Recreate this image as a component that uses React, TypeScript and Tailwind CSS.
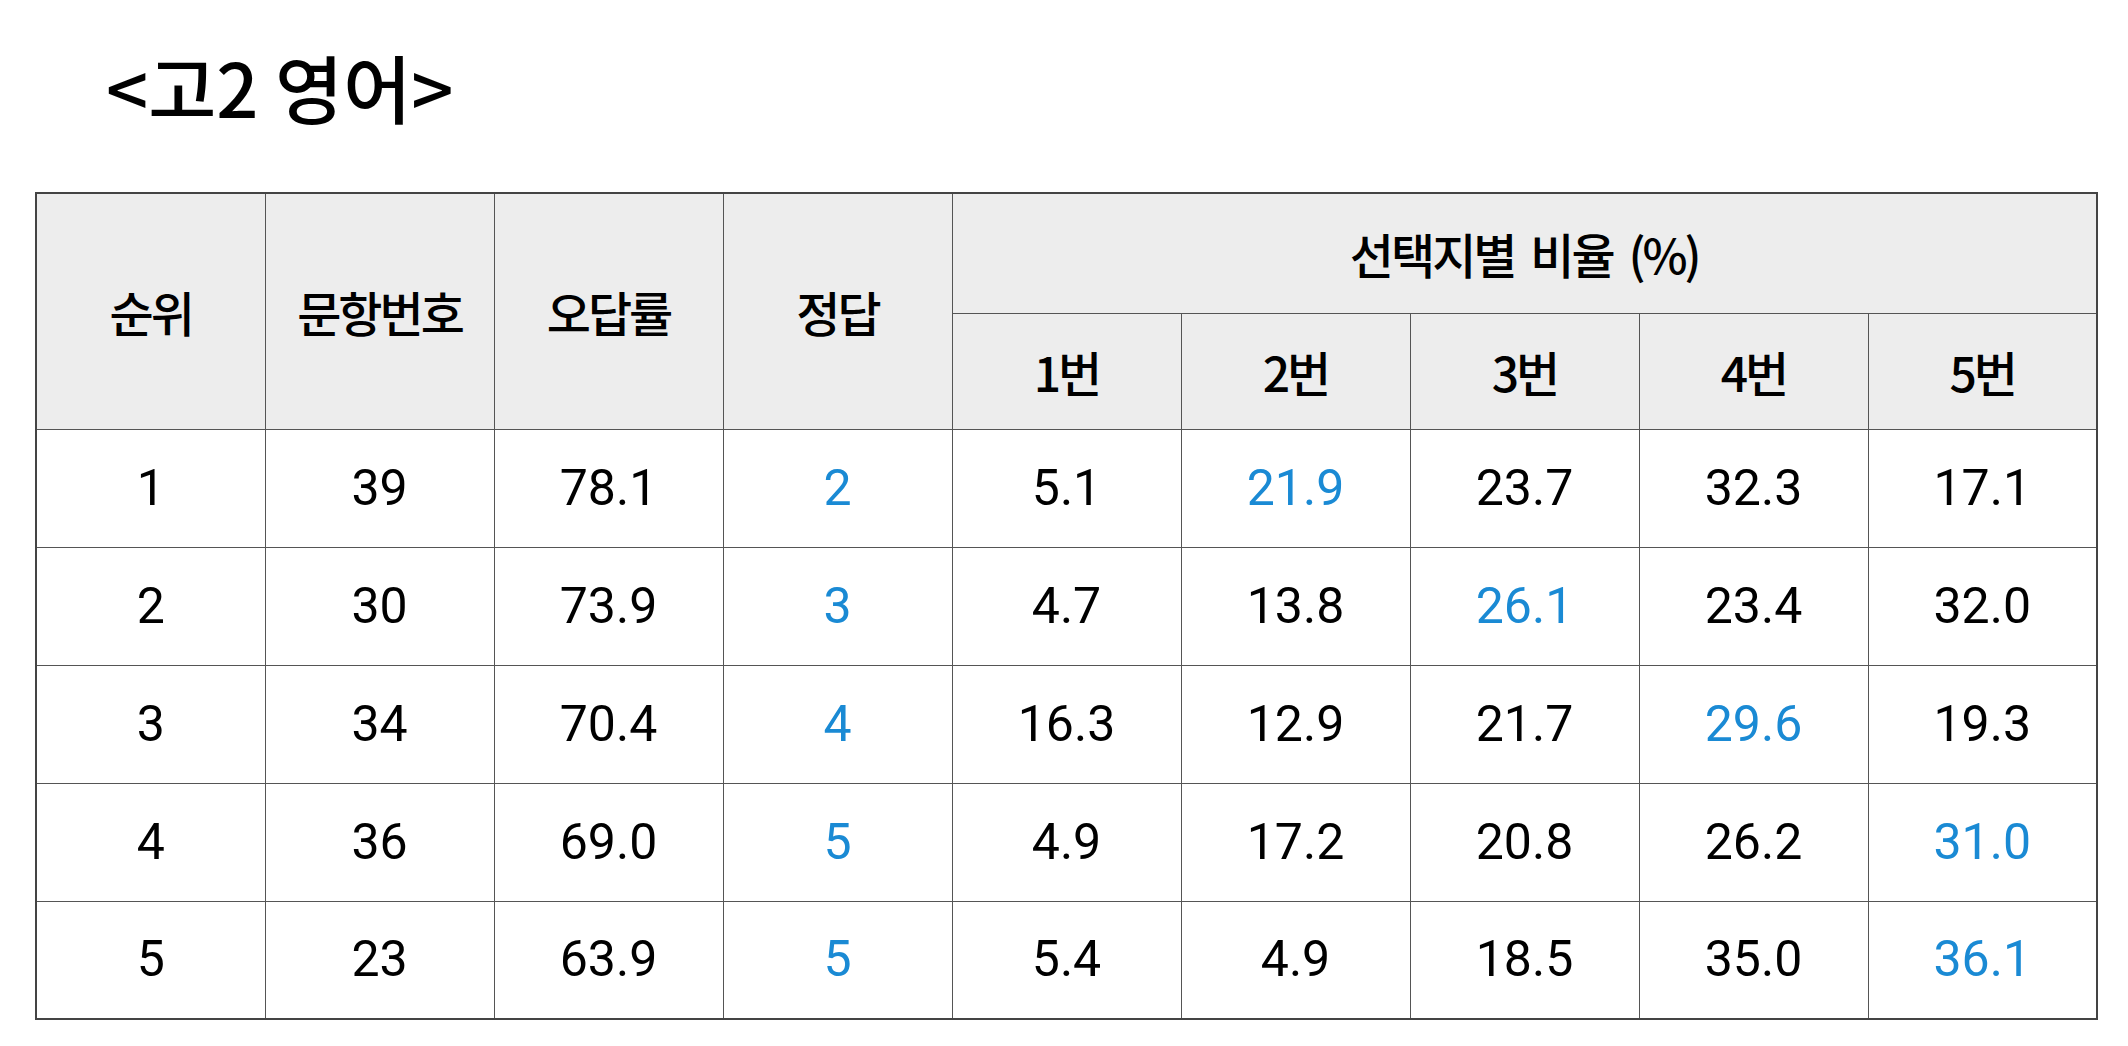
import React from "react";

const rows = [
  { rank: "1", q: "39", wrong: "78.1", ans: 2, p: ["5.1", "21.9", "23.7", "32.3", "17.1"] },
  { rank: "2", q: "30", wrong: "73.9", ans: 3, p: ["4.7", "13.8", "26.1", "23.4", "32.0"] },
  { rank: "3", q: "34", wrong: "70.4", ans: 4, p: ["16.3", "12.9", "21.7", "29.6", "19.3"] },
  { rank: "4", q: "36", wrong: "69.0", ans: 5, p: ["4.9", "17.2", "20.8", "26.2", "31.0"] },
  { rank: "5", q: "23", wrong: "63.9", ans: 5, p: ["5.4", "4.9", "18.5", "35.0", "36.1"] },
];

const kr = { fontFamily: '"Noto Sans CJK KR", "Noto Sans", sans-serif' };
const num = { fontFamily: 'Roboto, "Noto Sans CJK KR", sans-serif' };

export default function App() {
  const th =
    "border border-[#555] bg-[#ededed] text-center align-middle font-medium text-[48px] tracking-[-3px] [word-spacing:8px] text-black p-0";
  const td = "border border-[#555] text-center align-middle text-[50px] text-black p-0";
  return (
    <div className="w-[2128px] h-[1046px] bg-white overflow-hidden">
      <div className="pl-[106px] pt-[36px] h-[192px]">
        <h1 className="text-[74px] leading-[100px] font-medium text-black tracking-[0px]" style={kr}>
          &lt;고2 영어&gt;
        </h1>
      </div>
      <table className="ml-[35px] w-[2063px] table-fixed border-collapse border-2 border-[#444]">
        <thead style={kr}>
          <tr className="h-[120px]">
            <th rowSpan={2} className={th}>순위</th>
            <th rowSpan={2} className={th}>문항번호</th>
            <th rowSpan={2} className={th}>오답률</th>
            <th rowSpan={2} className={th}>정답</th>
            <th colSpan={5} className={th}>선택지별 비율 (%)</th>
          </tr>
          <tr className="h-[116px]">
            {["1번", "2번", "3번", "4번", "5번"].map((h) => (
              <th key={h} className={th}>{h}</th>
            ))}
          </tr>
        </thead>
        <tbody style={num}>
          {rows.map((r) => (
            <tr key={r.rank} className="h-[118px]">
              <td className={td}>{r.rank}</td>
              <td className={td}>{r.q}</td>
              <td className={td}>{r.wrong}</td>
              <td className={td + " !text-[#1a8ad4]"}>{r.ans}</td>
              {r.p.map((v, i) => (
                <td key={i} className={i + 1 === r.ans ? td + " !text-[#1a8ad4]" : td}>
                  {v}
                </td>
              ))}
            </tr>
          ))}
        </tbody>
      </table>
    </div>
  );
}
